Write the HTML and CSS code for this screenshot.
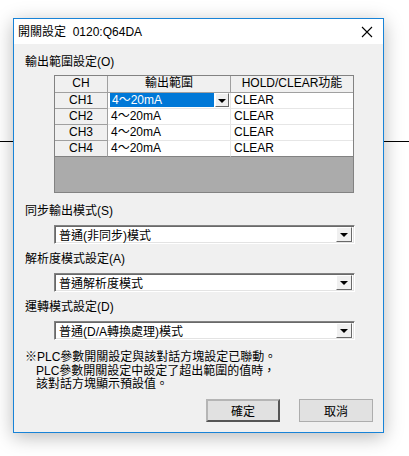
FILE: index.html
```html
<!DOCTYPE html>
<html lang="zh-Hant">
<head>
    <meta charset="UTF-8">
    <title>開關設定</title>
    <link rel="stylesheet" href="styles.css">
</head>
<body>
    <div class="backline"></div>

    <div class="dialog">
        <div class="titlebar">
            <span class="title">開關設定&nbsp; 0120:Q64DA</span>
            <svg class="close" width="12" height="12" viewBox="0 0 12 12">
                <path d="M1 1L11 11M11 1L1 11" stroke="#000" stroke-width="1.1"/>
            </svg>
        </div>

        <div class="content">
            <div class="label">輸出範圍設定(O)</div>

            <div class="grid">
                <div class="hd">CH</div>
                <div class="hd">輸出範圍</div>
                <div class="hd">HOLD/CLEAR功能</div>

                <div class="ch">CH1</div>
                <div class="cell editing">
                    <span class="sel">4～20mA</span>
                    <span class="drop"><i></i></span>
                </div>
                <div class="cell">CLEAR</div>

                <div class="ch">CH2</div>
                <div class="cell">4～20mA</div>
                <div class="cell">CLEAR</div>

                <div class="ch">CH3</div>
                <div class="cell">4～20mA</div>
                <div class="cell">CLEAR</div>

                <div class="ch">CH4</div>
                <div class="cell">4～20mA</div>
                <div class="cell">CLEAR</div>

                <div class="empty"></div>
            </div>

            <div class="label sync">同步輸出模式(S)</div>
            <div class="combo">
                <span>普通(非同步)模式</span>
                <span class="drop"><i></i></span>
            </div>

            <div class="label">解析度模式設定(A)</div>
            <div class="combo">
                <span>普通解析度模式</span>
                <span class="drop"><i></i></span>
            </div>

            <div class="label">運轉模式設定(D)</div>
            <div class="combo">
                <span>普通(D/A轉換處理)模式</span>
                <span class="drop"><i></i></span>
            </div>

            <div class="note">
                ※PLC參數開關設定與該對話方塊設定已聯動。<br>
                PLC參數開關設定中設定了超出範圍的值時，<br>
                該對話方塊顯示預設值。
            </div>

            <div class="buttons">
                <button class="default">確定</button>
                <button>取消</button>
            </div>
        </div>
    </div>
</body>
</html>
```

FILE: styles.css
```css
body {
    margin: 0;
    background: #fff;
    font-family: "Liberation Sans", "Noto Sans CJK TC", sans-serif;
    font-size: 12px;
    color: #000;
    position: relative;
    height: 456px;
    overflow: hidden;
}

.backline {
    position: absolute;
    top: 141px;
    left: 0;
    right: 0;
    height: 1px;
    background: #000;
}

.dialog {
    position: relative;
    margin: 18px 0 0 13px;
    width: 369px;
    height: 413px;
    border: 1px solid #1883d7;
    background: #f0f0f0;
    box-shadow: 0 4px 18px rgba(0, 0, 0, 0.28);
    display: flex;
    flex-direction: column;
}

.titlebar {
    height: 25px;
    background: #fff;
    display: flex;
    align-items: center;
    justify-content: space-between;
    padding: 0 10px 0 4px;
}

.title {
    line-height: 16px;
}

.content {
    padding: 10px 10px 0 11px;
    display: flex;
    flex-direction: column;
}

.label {
    line-height: 16px;
    height: 16px;
}

.grid {
    margin: 5px 0 0 29px;
    width: 298px;
    border: 1px solid #828282;
    display: grid;
    grid-template-columns: 53px 123px 122px;
    grid-template-rows: 17px 16px 16px 16px 16px 35px;
    background: #fff;
}

.grid > div {
    line-height: 15px;
    box-sizing: border-box;
    white-space: nowrap;
    overflow: hidden;
}

.hd {
    background: #f0f0f0;
    text-align: center;
    border-right: 1px solid #a0a0a0;
    border-bottom: 1px solid #a0a0a0;
}

.hd:nth-child(3) {
    border-right: none;
}

.ch {
    background: #f0f0f0;
    text-align: center;
    border-right: 1px solid #a0a0a0;
    border-bottom: 1px solid #a0a0a0;
}

.cell {
    padding-left: 3px;
    border-right: 1px solid #e6e6e6;
    border-bottom: 1px solid #e6e6e6;
}

.cell:nth-child(3n) {
    border-right: none;
}

.grid .ch:nth-child(13),
.grid .cell:nth-child(14),
.grid .cell:nth-child(15) {
    border-bottom: 1px solid #828282;
}

.cell.editing {
    display: flex;
    padding: 0 1px 0 2px;
}

.sel {
    flex: 1;
    background: #0078d7;
    color: #fff;
    padding-left: 2px;
    height: 14px;
    line-height: 14px;
}

.empty {
    grid-column: 1 / 4;
    background: #ababab;
}

.drop {
    width: 14px;
    height: 14px;
    box-sizing: border-box;
    background: #f0f0f0;
    border: 1px solid;
    border-color: #fff #696969 #696969 #fff;
    display: flex;
    align-items: center;
    justify-content: center;
    margin-left: 1px;
}

.drop i {
    width: 0;
    height: 0;
    border-left: 4px solid transparent;
    border-right: 4px solid transparent;
    border-top: 4px solid #000;
    margin-top: 1px;
}

.sync {
    margin-top: 10px;
}

.combo {
    margin: 6px 0 7px 29px;
    width: 301px;
    height: 19px;
    box-sizing: border-box;
    background: #fff;
    border: 1px solid;
    border-color: #828282 #fff #fff #828282;
    box-shadow: inset 1px 1px 0 #696969, inset -1px -1px 0 #e3e3e3;
    display: flex;
    align-items: center;
    justify-content: space-between;
    padding: 0 2px 0 4px;
}

.combo .drop {
    width: 16px;
    height: 15px;
}

.note {
    margin-top: 4px;
    line-height: 13.5px;
    padding-left: 11px;
    text-indent: -11px;
}

.buttons {
    display: flex;
    justify-content: flex-end;
    gap: 19px;
    margin-top: 7px;
}

button {
    width: 74px;
    height: 23px;
    font: inherit;
    background: #e1e1e1;
    border: 1px solid #adadad;
    padding: 0;
}

button.default {
    border: 2px solid #6d6d6d;
    border-color: #b5b5b5 #555 #555 #b5b5b5;
}
```
